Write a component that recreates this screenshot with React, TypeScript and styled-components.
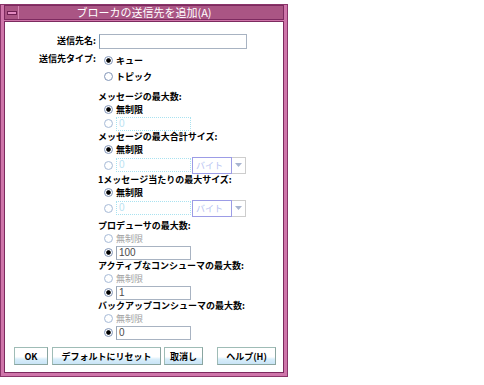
import styled, { createGlobalStyle } from 'styled-components';

const GlobalStyle = createGlobalStyle`
  html, body {
    margin: 0;
    padding: 0;
    background: #ffffff;
  }
  body {
    font-family: "Noto Sans CJK JP", "DejaVu Sans", sans-serif;
    font-size: 9px;
    color: #000;
  }
`;

type Limit = {
  title: string;
  unlimited: boolean;
  value: string;
  unit?: boolean;
};

const limits: Limit[] = [
  { title: 'メッセージの最大数:', unlimited: true, value: '0' },
  { title: 'メッセージの最大合計サイズ:', unlimited: true, value: '0', unit: true },
  { title: '1メッセージ当たりの最大サイズ:', unlimited: true, value: '0', unit: true },
  { title: 'プロデューサの最大数:', unlimited: false, value: '100' },
  { title: 'アクティブなコンシューマの最大数:', unlimited: false, value: '1' },
  { title: 'バックアップコンシューマの最大数:', unlimited: false, value: '0' },
];

const App = () => {
  return (
    <>
      <GlobalStyle />
      <Window>
        <TitleBar>
          <MenuButton><Dash /></MenuButton>
          <Title>ブローカの送信先を追加(A)</Title>
        </TitleBar>
        <Client>
          <NameRow>
            <FieldLabel>送信先名:</FieldLabel>
            <TextField $width={148} $focus />
          </NameRow>
          <TypeRow>
            <FieldLabel>送信先タイプ:</FieldLabel>
            <TypeOptions>
              <TypeOption><Radio $checked />キュー</TypeOption>
              <TypeOption><Radio />トピック</TypeOption>
            </TypeOptions>
          </TypeRow>
          <Sections>
            {limits.map((item, i) => (
              <Section key={item.title} $gap={i === 3}>
                <SectionTitle>{item.title}</SectionTitle>
                <OptionRow $disabled={!item.unlimited}>
                  <Radio $checked={item.unlimited} $faint={!item.unlimited} />
                  無制限
                </OptionRow>
                <ValueRow $tall={!!item.unit}>
                  <Radio $checked={!item.unlimited} $faint={item.unlimited} />
                  <TextField $width={75} $disabled={item.unlimited}>{item.value}</TextField>
                  {item.unit && (
                    <Combo>
                      <ComboText>バイト</ComboText>
                      <ComboArrow>
                        <svg width="7" height="4" viewBox="0 0 7 4">
                          <path d="M0 0 H7 L3.5 4 Z" fill="#a8b4d0" />
                        </svg>
                      </ComboArrow>
                    </Combo>
                  )}
                </ValueRow>
              </Section>
            ))}
          </Sections>
          <ButtonBar>
            <Button $width={34}>OK</Button>
            <Button $width={109}>デフォルトにリセット</Button>
            <Button $width={39}>取消し</Button>
            <Button $width={59} $right>ヘルプ(H)</Button>
          </ButtonBar>
        </Client>
      </Window>
    </>
  );
};

const Window = styled.div`
  width: 288px;
  box-sizing: border-box;
  margin-top: 4px;
  border: 1px solid #8a356a;
  background: #cf76aa;
  padding: 0 3px 3px 3px;
  display: flex;
  flex-direction: column;
`;

const TitleBar = styled.div`
  height: 15px;
  box-sizing: border-box;
  border: 1px solid #7d2a5f;
  background: #aa5584;
  display: flex;
  align-items: stretch;
`;

const MenuButton = styled.div`
  width: 13px;
  border-right: 1px solid #d585b4;
  display: flex;
  align-items: center;
  justify-content: center;
`;

const Dash = styled.div`
  width: 8px;
  height: 2px;
  background: #e28ac0;
  border: 1px solid #6f1f52;
`;

const Title = styled.div`
  flex: 1;
  text-align: center;
  color: #ffffff;
  font-size: 11px;
  line-height: 13px;
  padding-right: 14px;
`;

const Client = styled.div`
  margin-top: 1px;
  background: #ffffff;
  border: 1px solid #7d2a5f;
  padding: 12px 7px 7px 0;
  display: flex;
  flex-direction: column;
`;

const NameRow = styled.div`
  display: flex;
  align-items: center;
  gap: 3px;
  height: 14px;
`;

const FieldLabel = styled.div`
  width: 91px;
  text-align: right;
  font-weight: bold;
  line-height: 12px;
  flex: none;
`;

const TypeRow = styled.div`
  display: flex;
  align-items: flex-start;
  gap: 8px;
  margin-top: 4px;
  ${FieldLabel} {
    margin-top: 1px;
  }
`;

const TypeOptions = styled.div`
  display: flex;
  flex-direction: column;
`;

const TypeOption = styled.div`
  height: 16px;
  display: flex;
  align-items: center;
  gap: 3px;
  font-weight: bold;
`;

const Radio = styled.span<{ $checked?: boolean; $faint?: boolean }>`
  width: 9px;
  height: 9px;
  box-sizing: border-box;
  border-radius: 50%;
  flex: none;
  border: 1px solid ${(p) => (p.$faint ? '#a9bcd8' : '#8497b8')};
  background: radial-gradient(circle at 50% 50%,
    ${(p) => (p.$checked ? '#000 0 1.8px, #6a6a6a 2.2px,' : '')} #ffffff 2.6px, #e4ecf6 100%);
`;

const Sections = styled.div`
  margin-left: 93px;
  margin-top: 7px;
  display: flex;
  flex-direction: column;
`;

const Section = styled.div<{ $gap?: boolean }>`
  display: flex;
  flex-direction: column;
  margin-top: ${(p) => (p.$gap ? '3px' : '0')};
`;

const SectionTitle = styled.div`
  height: 12px;
  line-height: 12px;
  font-weight: bold;
  white-space: nowrap;
`;

const OptionRow = styled.div<{ $disabled?: boolean }>`
  height: 13px;
  display: flex;
  align-items: center;
  gap: 3px;
  padding-left: 6px;
  font-weight: ${(p) => (p.$disabled ? 'normal' : 'bold')};
  color: ${(p) => (p.$disabled ? '#a2a2a2' : '#000')};
`;

const ValueRow = styled.div<{ $tall?: boolean }>`
  height: ${(p) => (p.$tall ? '18px' : '15px')};
  display: flex;
  align-items: center;
  padding-left: 6px;
  ${Radio} {
    margin-right: 3px;
  }
`;

const TextField = styled.div<{ $width: number; $disabled?: boolean; $focus?: boolean }>`
  width: ${(p) => p.$width}px;
  height: ${(p) => (p.$focus ? 15 : 14)}px;
  box-sizing: border-box;
  border: 1px ${(p) => (p.$disabled ? 'dotted #a9e2f0' : 'solid #a8b3c2')};
  border-left-color: ${(p) => (p.$focus ? '#7f9bb5' : p.$disabled ? '#a9e2f0' : '#98a4b4')};
  background: #ffffff;
  color: ${(p) => (p.$disabled ? '#b9e2f2' : '#4a4a4a')};
  font-family: "Liberation Sans", "DejaVu Sans", sans-serif;
  font-size: 10px;
  line-height: 12px;
  padding-left: 2px;
`;

const Combo = styled.div`
  display: flex;
  height: 17px;
  margin-left: 1px;
`;

const ComboText = styled.div`
  width: 40px;
  box-sizing: border-box;
  border: 1px solid #9c9ce6;
  color: #b7c3f2;
  line-height: 15px;
  padding-left: 3px;
`;

const ComboArrow = styled.div`
  width: 14px;
  box-sizing: border-box;
  border: 1px solid #cdcdcd;
  border-left: none;
  display: flex;
  align-items: center;
  justify-content: center;
`;

const ButtonBar = styled.div`
  display: flex;
  margin-top: 7px;
  padding-left: 9px;
  gap: 3px;
`;

const Button = styled.button<{ $width: number; $right?: boolean }>`
  width: ${(p) => p.$width}px;
  height: 18px;
  margin: 0;
  margin-left: ${(p) => (p.$right ? 'auto' : '0')};
  padding: 0;
  border: 1px solid #9fbcb6;
  border-right-color: #8aa5a0;
  border-bottom-color: #8aa5a0;
  background: linear-gradient(to bottom, #ffffff 0%, #ffffff 55%, #d8eefa 70%, #c9e4f6 100%);
  font-family: "Noto Sans CJK JP", "DejaVu Sans", sans-serif;
  font-size: 9px;
  font-weight: bold;
  color: #000;
  &:first-child {
    margin-right: 1px;
  }
`;

export default App;
